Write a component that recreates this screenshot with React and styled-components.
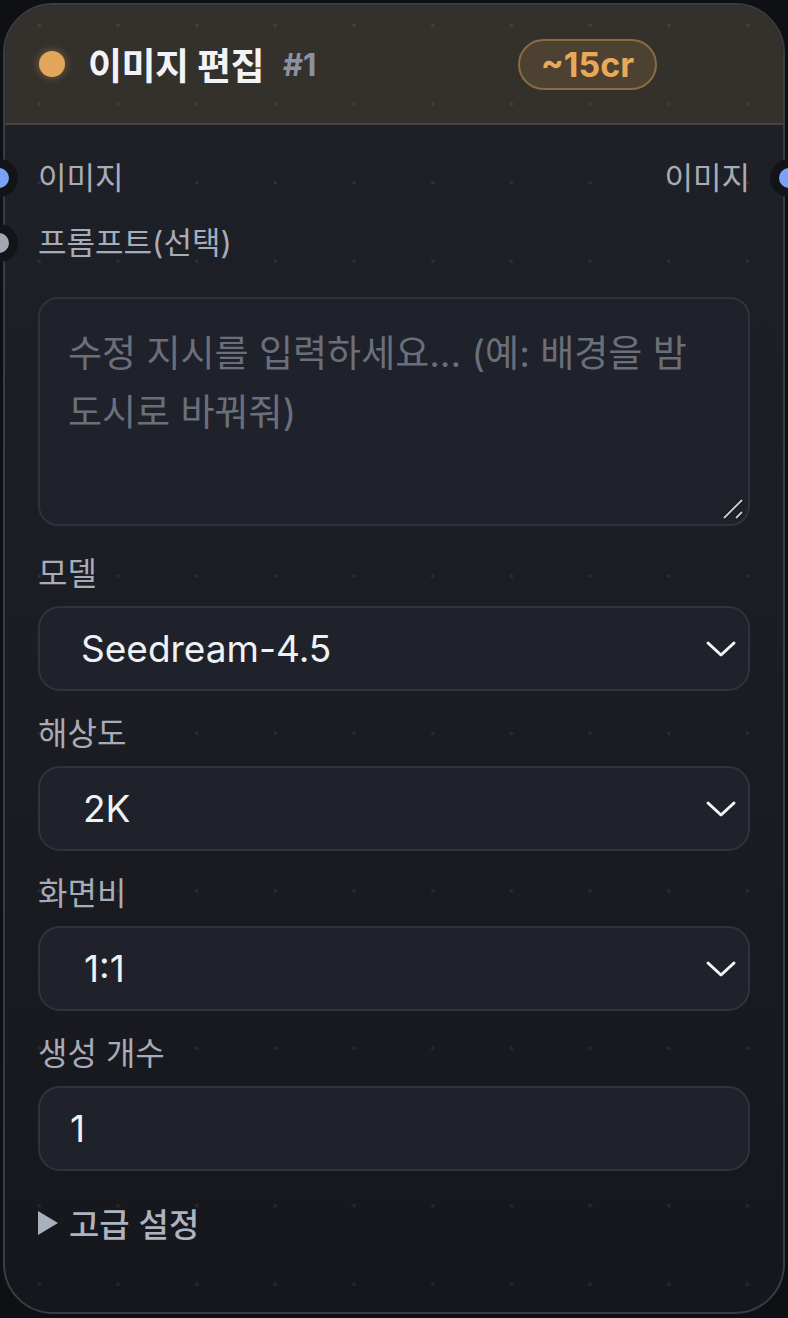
import styled, { createGlobalStyle } from "styled-components";

const GlobalStyle = createGlobalStyle`
  html, body {
    margin: 0;
    padding: 0;
    background: #0e1014;
    overflow: hidden;
  }
  * {
    box-sizing: border-box;
  }
`

const dots = `
  radial-gradient(circle at center, rgba(255, 255, 255, 0.07) 1.6px, transparent 2.2px) 0 -14px / 78.7px 78.7px fixed
`

const Card = styled.div`
  position: relative;
  margin: 3px;
  width: 782px;
  height: 1311px;
  border: 2px solid #393c44;
  border-radius: 50px;
  background: ${dots}, linear-gradient(180deg, #1f2128 0%, #1b1d23 50%, #15171c 100%);
  font-family: Inter, "Noto Sans CJK KR", sans-serif;
  display: flex;
  flex-direction: column;
`

const Header = styled.div`
  height: 120px;
  flex-shrink: 0;
  display: flex;
  align-items: center;
  padding: 0 126px 0 34px;
  border-bottom: 2px solid #47423c;
  border-radius: 48px 48px 0 0;
  background: ${dots}, #34302c;
`

const StatusDot = styled.span`
  width: 26px;
  height: 26px;
  border-radius: 50%;
  background: #e2a65a;
  box-shadow: 0 0 10px rgba(226, 166, 90, 0.45);
  flex-shrink: 0;
`

const Title = styled.h1`
  margin: 0 0 0 23px;
  font-size: 37px;
  font-weight: 700;
  color: #f2f3f6;
  letter-spacing: -0.5px;
`

const NodeId = styled.span`
  margin-left: 19px;
  font-size: 31px;
  font-weight: 700;
  color: #8a92a2;
`

const Cost = styled.span`
  margin-left: auto;
  height: 51px;
  padding: 0 21px;
  display: flex;
  align-items: center;
  border: 2px solid #8b6b42;
  border-radius: 26px;
  background: #4d4132;
  color: #e8aa58;
  font-size: 34px;
  font-weight: 700;
`

const Body = styled.div`
  padding: 35px 33px 0;
  display: flex;
  flex-direction: column;
`

const PortRow = styled.div`
  position: relative;
  height: 36px;
  line-height: 36px;
  font-size: 31px;
  color: #a7acb8;
  display: flex;
  justify-content: ${(p) => (p.$both ? "space-between" : "flex-start")};
  & + & {
    margin-top: 29px;
  }
`

const Port = styled.span`
  position: absolute;
  top: -1px;
  ${(p) => (p.$side === "right" ? "right: -58px;" : "left: -58px;")}
  width: 38px;
  height: 38px;
  border-radius: 50%;
  border: 9px solid #121418;
  background: ${(p) => p.$color};
`

const PromptWrap = styled.div`
  position: relative;
  margin-top: 36px;
  margin-bottom: 30px;
`

const Prompt = styled.textarea`
  display: block;
  width: 100%;
  height: 229px;
  resize: none;
  padding: 25px 28px;
  border: 2px solid #30333c;
  border-radius: 20px;
  background: #1f222a;
  color: #e8e9ee;
  font-family: Inter, "Noto Sans CJK KR", sans-serif;
  font-size: 37px;
  line-height: 59px;
  outline: none;
  &::placeholder {
    color: #6b6f7a;
  }
`

const ResizeHandle = styled.svg`
  position: absolute;
  right: 4px;
  bottom: 4px;
  pointer-events: none;
`

const Field = styled.div`
  display: flex;
  flex-direction: column;
  & + & {
    margin-top: 25px;
  }
`

const Label = styled.label`
  height: 36px;
  line-height: 36px;
  margin-bottom: 14px;
  font-size: 32px;
  color: #a7acb8;
`

const SelectWrap = styled.div`
  position: relative;
`

const Select = styled.select`
  display: block;
  width: 100%;
  height: 85px;
  appearance: none;
  padding: 0 60px 0 ${(p) => p.$indent || 41}px;
  border: 2px solid #30333c;
  border-radius: 22px;
  background: #1f222a;
  color: #f0f1f4;
  font-family: Inter, "Noto Sans CJK KR", sans-serif;
  font-size: 37px;
  outline: none;
`

const Chevron = styled.svg`
  position: absolute;
  right: 13px;
  top: 50%;
  transform: translateY(-50%);
  pointer-events: none;
`

const NumberInput = styled.input`
  display: block;
  width: 100%;
  height: 85px;
  padding: 0 30px;
  border: 2px solid #30333c;
  border-radius: 22px;
  background: #1f222a;
  color: #f0f1f4;
  font-family: Inter, "Noto Sans CJK KR", sans-serif;
  font-size: 37px;
  outline: none;
`

const Advanced = styled.div`
  margin-top: 34px;
  height: 36px;
  display: flex;
  align-items: center;
  gap: 11px;
  font-size: 33px;
  font-weight: 500;
  color: #aeb3c0;
`

const Triangle = styled.span`
  width: 0;
  height: 0;
  border-top: 12px solid transparent;
  border-bottom: 12px solid transparent;
  border-left: 20px solid #a9afbd;
`

const ChevronIcon = () => (
  <Chevron width="32" height="20" viewBox="0 0 32 20">
    <polyline points="3,4 16,16 29,4" fill="none" stroke="#f4f5f7" strokeWidth="3" strokeLinecap="round" strokeLinejoin="round" />
  </Chevron>
)

const SelectField = ({ label, value, options, indent }) => (
  <Field>
    <Label>{label}</Label>
    <SelectWrap>
      <Select defaultValue={value} $indent={indent}>
        {options.map((o) => (
          <option key={o} value={o}>{o}</option>
        ))}
      </Select>
      <ChevronIcon />
    </SelectWrap>
  </Field>
)

const App = () => {
  return (
    <>
      <GlobalStyle />
      <Card>
        <Header>
          <StatusDot />
          <Title>이미지 편집</Title>
          <NodeId>#1</NodeId>
          <Cost>~15cr</Cost>
        </Header>
        <Body>
          <PortRow $both>
            <Port $color="#7aa2f7" />
            <span>이미지</span>
            <span>이미지</span>
            <Port $side="right" $color="#7aa2f7" />
          </PortRow>
          <PortRow>
            <Port $color="#a3a7b0" />
            <span>프롬프트(선택)</span>
          </PortRow>
          <PromptWrap>
            <Prompt placeholder="수정 지시를 입력하세요... (예: 배경을 밤 도시로 바꿔줘)" />
            <ResizeHandle width="28" height="28" viewBox="0 0 28 28">
              <line x1="24" y1="6" x2="6" y2="24" stroke="#111" strokeWidth="4" />
              <line x1="24" y1="6" x2="6" y2="24" stroke="#c9c9c9" strokeWidth="2" />
              <line x1="24" y1="18" x2="18" y2="24" stroke="#111" strokeWidth="4" />
              <line x1="24" y1="18" x2="18" y2="24" stroke="#c9c9c9" strokeWidth="2" />
            </ResizeHandle>
          </PromptWrap>
          <SelectField label="모델" value="Seedream-4.5" options={["Seedream-4.5", "Seedream-4.0"]} />
          <SelectField label="해상도" value="2K" options={["1K", "2K", "4K"]} indent={43} />
          <SelectField label="화면비" value="1:1" options={["1:1", "16:9", "9:16"]} indent={44} />
          <Field>
            <Label>생성 개수</Label>
            <NumberInput type="text" defaultValue="1" />
          </Field>
          <Advanced>
            <Triangle />
            <span>고급 설정</span>
          </Advanced>
        </Body>
      </Card>
    </>
  )
}

export default App
